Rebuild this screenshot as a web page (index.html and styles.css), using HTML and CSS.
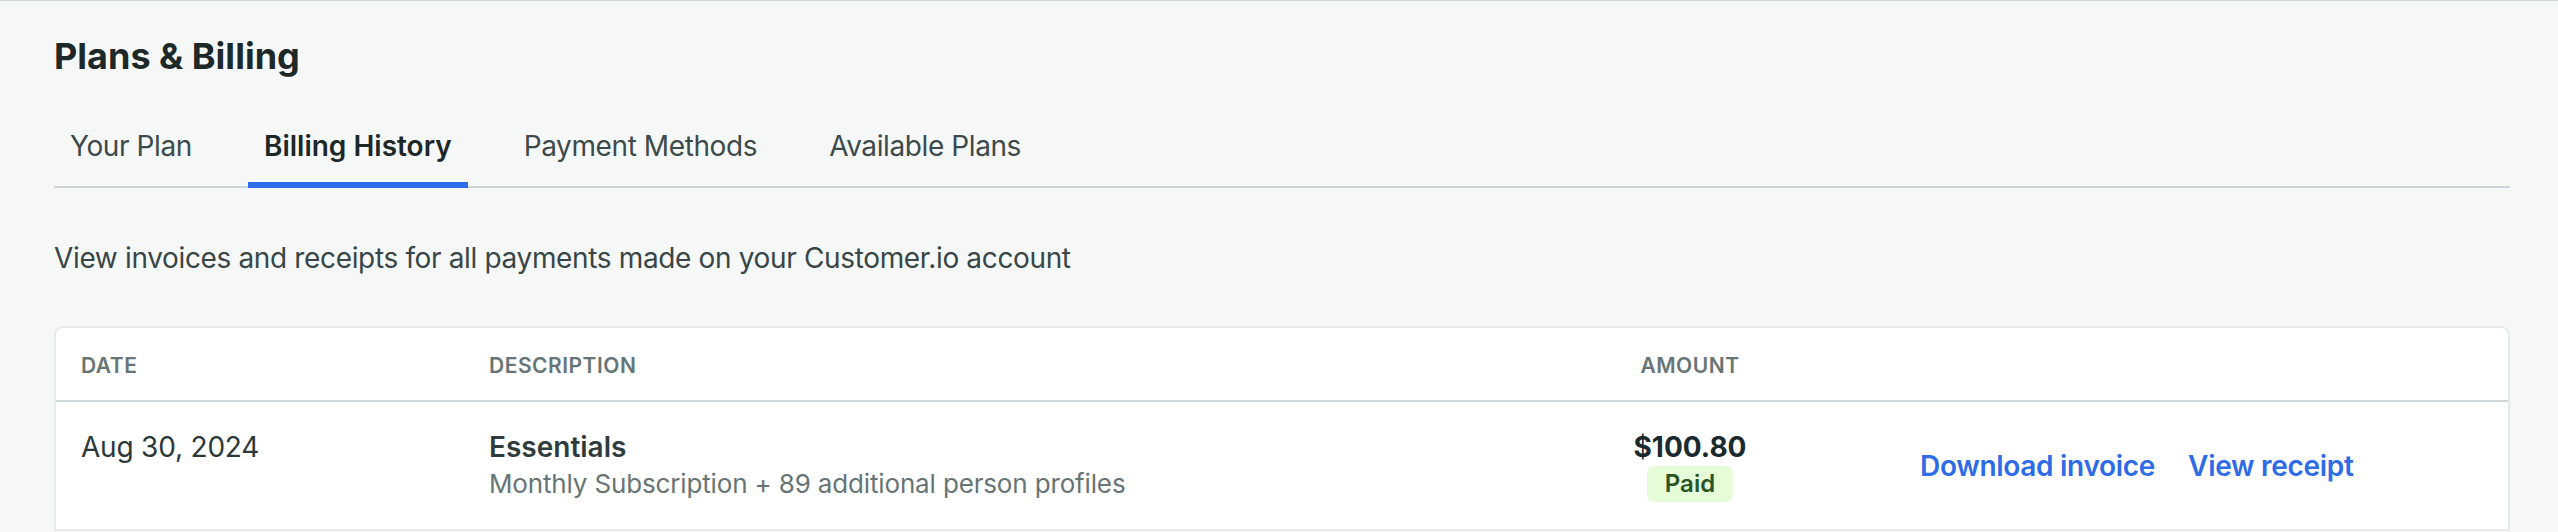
FILE: index.html
```html
<!DOCTYPE html>
<html lang="en">
<head>
<meta charset="utf-8">
<title>Plans &amp; Billing</title>
<link rel="stylesheet" href="styles.css">
</head>
<body>
<main class="page">
  <h1 class="page-title">Plans &amp; Billing</h1>
  <nav class="tabs">
    <a class="tab">Your Plan</a>
    <a class="tab tab-active">Billing History</a>
    <a class="tab">Payment Methods</a>
    <a class="tab">Available Plans</a>
  </nav>
  <p class="intro">View invoices and receipts for all payments made on your Customer.io account</p>
  <section class="card">
    <div class="row row-head">
      <div class="cell">Date</div>
      <div class="cell">Description</div>
      <div class="cell cell-amount">Amount</div>
      <div class="cell cell-actions"></div>
    </div>
    <div class="row row-body">
      <div class="cell cell-date">Aug 30, 2024</div>
      <div class="cell cell-desc">
        <div class="desc-title">Essentials</div>
        <div class="desc-sub">Monthly Subscription + 89 additional person profiles</div>
      </div>
      <div class="cell cell-amount">
        <div class="amount">$100.80</div>
        <span class="badge">Paid</span>
      </div>
      <div class="cell cell-actions">
        <a class="link">Download invoice</a>
        <a class="link">View receipt</a>
      </div>
    </div>
  </section>
</main>
</body>
</html>
```
FILE: styles.css
```css
* { box-sizing: border-box; }
html, body { margin: 0; padding: 0; }
body {
  background: #f6f8f8;
  border-top: 1px solid #d2d9dc;
  font-family: Inter, "Noto Sans", sans-serif;
  color: #1e2a2b;
  overflow: hidden;
  height: 532px;
}
.page {
  padding: 33px 48px 0 54px;
}
.page-title {
  margin: 0;
  font-size: 36px;
  line-height: 44px;
  font-weight: 700;
  color: #1d2828;
  letter-spacing: 0;
}
.tabs {
  display: flex;
  gap: 40px;
  margin-top: 50px;
  border-bottom: 2px solid #ccd4d7;
}
.tab {
  display: block;
  padding: 0 16px 18px;
  margin-bottom: -2px;
  font-size: 28px;
  line-height: 36px;
  letter-spacing: -0.4px;
  color: #3c4a4b;
  border-bottom: 6px solid transparent;
}
.tab-active {
  font-weight: 600;
  letter-spacing: 0;
  color: #1d2828;
  border-bottom-color: #2e6de8;
}
.intro {
  margin: 52px 0 0;
  font-size: 28px;
  line-height: 36px;
  letter-spacing: -0.35px;
  color: #384647;
}
.card {
  margin-top: 50px;
  background: #ffffff;
  border: 2px solid #e6eaeb;
  border-bottom: none;
  border-radius: 9px 9px 0 0;
}
.row {
  display: grid;
  grid-template-columns: 408px 1101px 200px 1fr;
  padding-left: 25px;
}
.row-head {
  padding-top: 22px;
  padding-bottom: 18px;
  border-bottom: 2px solid #cfd7da;
  font-size: 21px;
  line-height: 32px;
  font-weight: 600;
  letter-spacing: 0.5px;
  text-transform: uppercase;
  color: #677577;
}
.row-body {
  padding-top: 27px;
  padding-bottom: 27px;
  border-bottom: 2px solid #e6eaeb;
  font-size: 28px;
  line-height: 36px;
  color: #2b3839;
}
.cell-date {
  letter-spacing: -0.2px;
}
.cell-amount {
  display: flex;
  flex-direction: column;
  align-items: center;
}
.desc-title {
  font-weight: 600;
  color: #2f3c3e;
}
.desc-sub {
  margin-top: 2px;
  font-size: 26px;
  line-height: 34px;
  letter-spacing: -0.15px;
  color: #677475;
}
.amount {
  font-weight: 700;
  color: #1a2a2e;
}
.badge {
  margin-top: 1px;
  padding: 0 18px;
  height: 36px;
  font-size: 24px;
  line-height: 36px;
  font-weight: 600;
  color: #2a5625;
  background: #e6fbd8;
  border-radius: 6px;
}
.cell-actions {
  display: flex;
  gap: 33px;
  align-self: center;
  padding-left: 130px;
}
.link {
  font-weight: 600;
  letter-spacing: -0.3px;
  color: #2e6be6;
  cursor: pointer;
}
```
